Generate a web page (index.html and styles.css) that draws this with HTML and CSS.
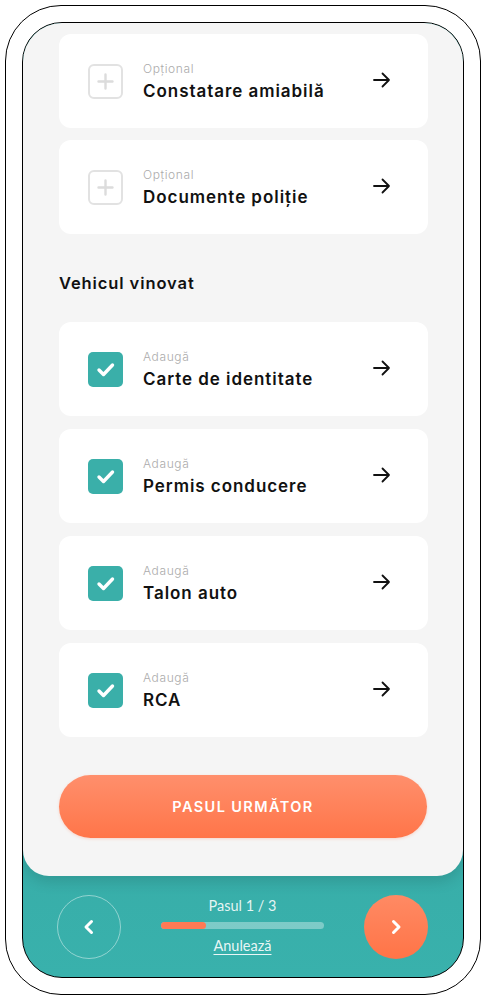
FILE: index.html
```html
<!DOCTYPE html>
<html lang="ro">
<head>
<meta charset="utf-8">
<link rel="stylesheet" href="styles.css">
</head>
<body>
<div class="device">
  <div class="screen">
    <div class="panel">
      <div class="group first">
        <div class="card">
          <div class="box plus"><svg width="35" height="35" viewBox="0 0 35 35"><path d="M17.5 10.5v14M10.5 17.5h14" stroke="#dcdcdc" stroke-width="2.4" stroke-linecap="round"/></svg></div>
          <div class="txt"><div class="label">Opțional</div><div class="title">Constatare amiabilă</div></div>
          <svg class="arrow" width="18" height="16" viewBox="0 0 18 16"><path d="M1 8h15M9.5 1.5L16 8l-6.5 6.5" fill="none" stroke="#111" stroke-width="1.8" stroke-linecap="round" stroke-linejoin="round"/></svg>
        </div>
        <div class="card">
          <div class="box plus"><svg width="35" height="35" viewBox="0 0 35 35"><path d="M17.5 10.5v14M10.5 17.5h14" stroke="#dcdcdc" stroke-width="2.4" stroke-linecap="round"/></svg></div>
          <div class="txt"><div class="label">Opțional</div><div class="title">Documente poliție</div></div>
          <svg class="arrow" width="18" height="16" viewBox="0 0 18 16"><path d="M1 8h15M9.5 1.5L16 8l-6.5 6.5" fill="none" stroke="#111" stroke-width="1.8" stroke-linecap="round" stroke-linejoin="round"/></svg>
        </div>
      </div>
      <h2 class="heading">Vehicul vinovat</h2>
      <div class="group second">
        <div class="card">
          <div class="box check"><svg width="35" height="35" viewBox="0 0 35 35"><path d="M11 18l4.5 4.5L24.5 13" fill="none" stroke="#fff" stroke-width="3.4" stroke-linecap="round" stroke-linejoin="round"/></svg></div>
          <div class="txt"><div class="label">Adaugă</div><div class="title">Carte de identitate</div></div>
          <svg class="arrow" width="18" height="16" viewBox="0 0 18 16"><path d="M1 8h15M9.5 1.5L16 8l-6.5 6.5" fill="none" stroke="#111" stroke-width="1.8" stroke-linecap="round" stroke-linejoin="round"/></svg>
        </div>
        <div class="card">
          <div class="box check"><svg width="35" height="35" viewBox="0 0 35 35"><path d="M11 18l4.5 4.5L24.5 13" fill="none" stroke="#fff" stroke-width="3.4" stroke-linecap="round" stroke-linejoin="round"/></svg></div>
          <div class="txt"><div class="label">Adaugă</div><div class="title">Permis conducere</div></div>
          <svg class="arrow" width="18" height="16" viewBox="0 0 18 16"><path d="M1 8h15M9.5 1.5L16 8l-6.5 6.5" fill="none" stroke="#111" stroke-width="1.8" stroke-linecap="round" stroke-linejoin="round"/></svg>
        </div>
        <div class="card">
          <div class="box check"><svg width="35" height="35" viewBox="0 0 35 35"><path d="M11 18l4.5 4.5L24.5 13" fill="none" stroke="#fff" stroke-width="3.4" stroke-linecap="round" stroke-linejoin="round"/></svg></div>
          <div class="txt"><div class="label">Adaugă</div><div class="title">Talon auto</div></div>
          <svg class="arrow" width="18" height="16" viewBox="0 0 18 16"><path d="M1 8h15M9.5 1.5L16 8l-6.5 6.5" fill="none" stroke="#111" stroke-width="1.8" stroke-linecap="round" stroke-linejoin="round"/></svg>
        </div>
        <div class="card">
          <div class="box check"><svg width="35" height="35" viewBox="0 0 35 35"><path d="M11 18l4.5 4.5L24.5 13" fill="none" stroke="#fff" stroke-width="3.4" stroke-linecap="round" stroke-linejoin="round"/></svg></div>
          <div class="txt"><div class="label">Adaugă</div><div class="title">RCA</div></div>
          <svg class="arrow" width="18" height="16" viewBox="0 0 18 16"><path d="M1 8h15M9.5 1.5L16 8l-6.5 6.5" fill="none" stroke="#111" stroke-width="1.8" stroke-linecap="round" stroke-linejoin="round"/></svg>
        </div>
      </div>
      <button class="next-btn">PASUL URMĂTOR</button>
    </div>
    <div class="footer">
      <div class="circle back"><svg width="14" height="18" viewBox="0 0 14 18"><path d="M9.5 3.5L4 9l5.5 5.5" fill="none" stroke="#fff" stroke-width="3" stroke-linecap="round" stroke-linejoin="round"/></svg></div>
      <div class="progress">
        <div class="step">Pasul 1 / 3</div>
        <div class="bar"><div class="fill" style="width:45px"></div></div>
        <div class="cancel">Anulează</div>
      </div>
      <div class="circle fwd"><svg width="14" height="18" viewBox="0 0 14 18"><path d="M4.5 3.5L10 9l-5.5 5.5" fill="none" stroke="#fff" stroke-width="3" stroke-linecap="round" stroke-linejoin="round"/></svg></div>
    </div>
  </div>
</div>
</body>
</html>
```

FILE: styles.css
```css
* { box-sizing: border-box; }
html, body { margin: 0; padding: 0; background: #fff; }
body { font-family: Inter, "Noto Sans", sans-serif; }

.device {
  margin: 5px;
  width: 476px;
  height: 990px;
  border: 1.2px solid #000;
  border-radius: 56px;
  background: #fff;
  padding: 16px;
}

.screen {
  width: 442px;
  height: 956px;
  border: 1.2px solid #000;
  border-radius: 40px;
  overflow: hidden;
  background: linear-gradient(#2f9792, #39b1ac);
  display: flex;
  flex-direction: column;
}

.panel {
  height: 853px;
  background: #f5f5f5;
  border-radius: 0 0 26px 26px;
  padding: 11px 35px 0 36px;
  box-shadow: 0 6px 14px rgba(0, 0, 0, 0.12);
  position: relative;
  z-index: 1;
}

.group { display: flex; flex-direction: column; }
.group.first { gap: 12px; }
.group.second { gap: 13px; }

.card {
  height: 94px;
  background: #fff;
  border-radius: 12px;
  display: flex;
  align-items: center;
  padding: 0 37px 0 29px;
}

.box {
  width: 35px;
  height: 35px;
  border-radius: 6px;
  flex: none;
  display: flex;
}
.box.plus { border: 2px solid #e2e2e2; }
.box.plus svg { margin: -2px; }
.box.check { background: #3aafa9; border-radius: 5px; }

.txt { flex: 1; margin-left: 20px; margin-top: 0; }
.label {
  font-size: 12px;
  font-weight: 300;
  color: #ababab;
  line-height: 14px;
  letter-spacing: 0.6px;
}
.title {
  font-size: 17px;
  font-weight: 600;
  color: #111;
  line-height: 20px;
  margin-top: 5px;
  letter-spacing: 0.95px;
}
.arrow { flex: none; margin-top: -3px; }

.heading {
  margin: 39px 0 29px;
  font-size: 16.5px;
  font-weight: 600;
  line-height: 20px;
  color: #111;
  letter-spacing: 0.9px;
}

.next-btn {
  display: block;
  width: 368px;
  height: 63px;
  margin-top: 38px;
  border: none;
  border-radius: 32px;
  background: linear-gradient(#ff8f6c, #ff7549);
  color: #fff;
  font-family: Inter, "Noto Sans", sans-serif;
  font-weight: 600;
  font-size: 14.5px;
  letter-spacing: 1.4px;
  box-shadow: 0 1px 3px rgba(255, 120, 80, 0.25);
}

.footer {
  flex: 1;
  display: flex;
  align-items: center;
  justify-content: space-between;
  padding: 0 35px 0 34px;
}

.circle {
  width: 64px;
  height: 64px;
  border-radius: 50%;
  display: flex;
  align-items: center;
  justify-content: center;
}
.circle.back { border: 1.6px solid rgba(255, 255, 255, 0.45); }
.circle.fwd { background: linear-gradient(#ff8a64, #ff7447); }

.progress {
  display: flex;
  flex-direction: column;
  align-items: center;
  color: rgba(255, 255, 255, 0.88);
  font-family: Lato, "Open Sans", sans-serif;
  margin-top: -2px;
}
.step { font-size: 14.5px; line-height: 17px; }
.bar {
  width: 163px;
  height: 7px;
  border-radius: 4px;
  background: rgba(255, 255, 255, 0.35);
  margin: 8px 0 8px;
}
.fill { height: 100%; border-radius: 4px; background: #ff7a55; }
.cancel {
  font-size: 14.5px;
  line-height: 17px;
  text-decoration: underline;
  text-underline-offset: 3px;
  color: rgba(255, 255, 255, 0.9);
}
```
